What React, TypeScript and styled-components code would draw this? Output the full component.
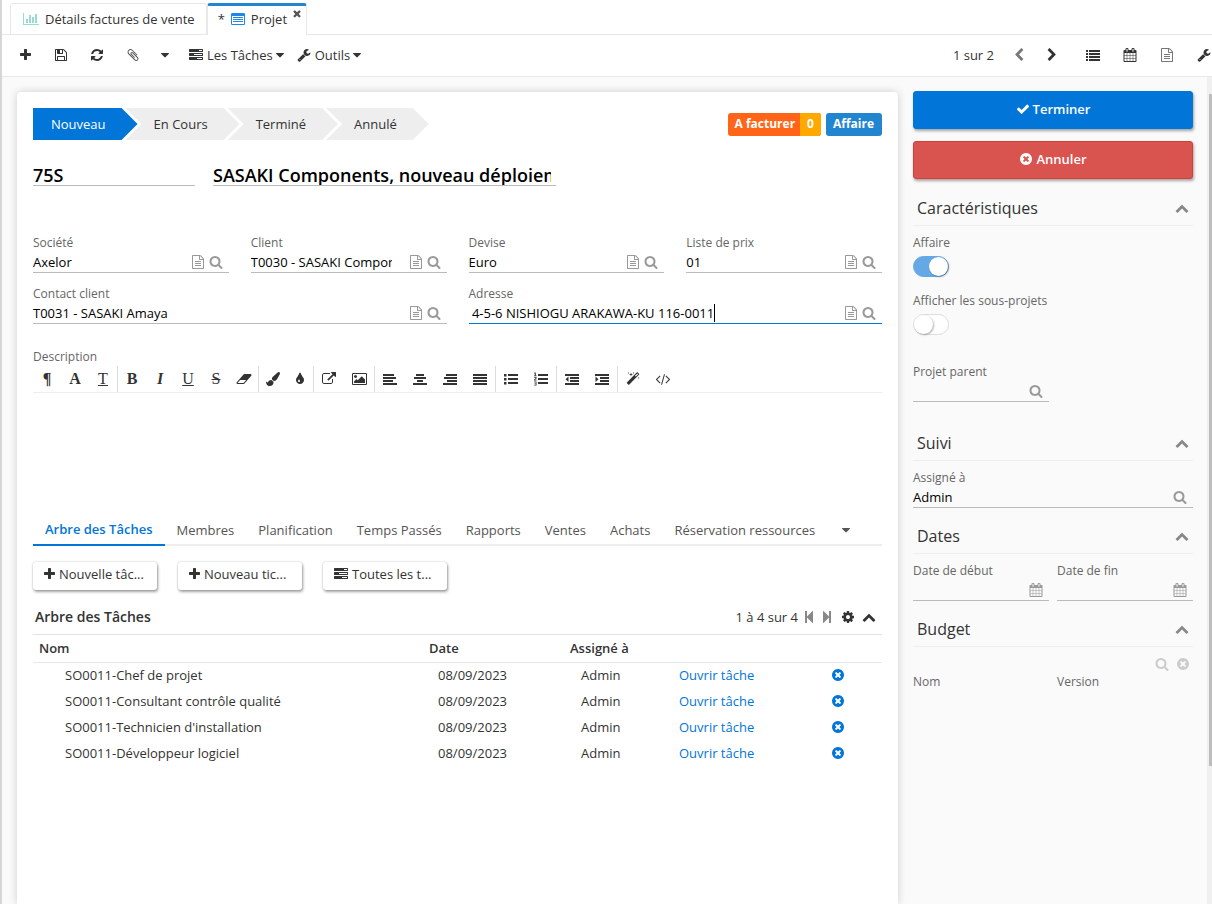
import React from "react";
import styled, { createGlobalStyle, css } from "styled-components";

const blue = "#0275d8";
const ink = "#333333";

const GlobalStyle = createGlobalStyle`
  *, *::before, *::after { box-sizing: border-box; }
  body { margin: 0; background: #ffffff; }
  body, button, input { font-family: "Open Sans", "Liberation Sans", sans-serif; font-size: 13px; line-height: 18px; color: ${ink}; }
  button { border: 0; background: none; padding: 0; cursor: pointer; }
  h1, h2, ul, ol { margin: 0; padding: 0; font-weight: 400; list-style: none; }
`;

/* Icon outlines on a 1792-unit em square */
const row = (x: number, y: number, w: number, h = 256) => `M${x} ${y}h${w}v${h}h${-w}z`;
const paths: Record<string, string> = {
  plus: "M1600 736v192q0 40-28 68t-68 28h-416v416q0 40-28 68t-68 28h-192q-40 0-68-28t-28-68v-416h-416q-40 0-68-28t-28-68v-192q0-40 28-68t68-28h416v-416q0-40 28-68t68-28h192q40 0 68 28t28 68v416h416q40 0 68 28t28 68z",
  save: "M512 1536h768v-384h-768v384zm896 0h128v-896q0-14-10-38.5t-20-34.5l-281-281q-10-10-34-20t-39-10v416q0 40-28 68t-68 28h-576q-40 0-68-28t-28-68v-416h-128v1280h128v-416q0-40 28-68t68-28h832q40 0 68 28t28 68v416zm-384-928v-320q0-13-9.5-22.5t-22.5-9.5h-192q-13 0-22.5 9.5t-9.5 22.5v320q0 13 9.5 22.5t22.5 9.5h192q13 0 22.5-9.5t9.5-22.5zm640 32v928q0 40-28 68t-68 28h-1344q-40 0-68-28t-28-68v-1344q0-40 28-68t68-28h928q40 0 88 20t76 48l280 280q28 28 48 76t20 88z",
  refresh: "M1639 1056q0 5-1 7-64 268-268 434.5t-478 166.5q-146 0-282.5-55t-243.5-157l-129 129q-19 19-45 19t-45-19-19-45v-448q0-26 19-45t45-19h448q26 0 45 19t19 45-19 45l-137 137q71 66 161 102t187 36q134 0 250-65t186-179q11-17 53-117 8-23 30-23h192q13 0 22.5 9.5t9.5 22.5zm25-800v448q0 26-19 45t-45 19h-448q-26 0-45-19t-19-45 19-45l138-138q-148-137-349-137-134 0-250 65t-186 179q-11 17-53 117-8 23-30 23h-199q-13 0-22.5-9.5t-9.5-22.5v-7q65-268 270-434.5t480-166.5q146 0 284 55.5t245 156.5l130-129q19-19 45-19t45 19 19 45z",
  search: "M1216 832q0-185-131.5-316.5t-316.5-131.5-316.5 131.5-131.5 316.5 131.5 316.5 316.5 131.5 316.5-131.5 131.5-316.5zm512 832q0 52-38 90t-90 38q-54 0-90-38l-343-342q-179 124-399 124-143 0-273.5-55.5t-225-150-150-225-55.5-273.5 55.5-273.5 150-225 225-150 273.5-55.5 273.5 55.5 225 150 150 225 55.5 273.5q0 220-124 399l343 343q37 37 37 90z",
  file: "M1596 380q28 28 48 76t20 88v1152q0 40-28 68t-68 28h-1344q-40 0-68-28t-28-68v-1600q0-40 28-68t68-28h896q40 0 88 20t76 48zm-444-244v376h376q-10-29-22-41l-313-313q-12-12-41-22zm384 1528v-1024h-416q-40 0-68-28t-28-68v-416h-768v1536h1280zm-1024-864q0-14 9-23t23-9h704q14 0 23 9t9 23v64q0 14-9 23t-23 9h-704q-14 0-23-9t-9-23v-64zm736 224q14 0 23 9t9 23v64q0 14-9 23t-23 9h-704q-14 0-23-9t-9-23v-64q0-14 9-23t23-9h704zm0 256q14 0 23 9t9 23v64q0 14-9 23t-23 9h-704q-14 0-23-9t-9-23v-64q0-14 9-23t23-9h704z",
  calendar: "M192 1664h288v-288h-288v288zm352 0h320v-288h-320v288zm-352-352h288v-320h-288v320zm352 0h320v-320h-320v320zm-352-384h288v-288h-288v288zm736 736h320v-288h-320v288zm-384-736h320v-288h-320v288zm768 736h288v-288h-288v288zm-384-352h320v-320h-320v320zm-352-864v-288q0-13-9.5-22.5t-22.5-9.5h-64q-13 0-22.5 9.5t-9.5 22.5v288q0 13 9.5 22.5t22.5 9.5h64q13 0 22.5-9.5t9.5-22.5zm736 864h288v-320h-288v320zm-384-384h320v-288h-320v288zm384 0h288v-288h-288v288zm32-480v-288q0-13-9.5-22.5t-22.5-9.5h-64q-13 0-22.5 9.5t-9.5 22.5v288q0 13 9.5 22.5t22.5 9.5h64q13 0 22.5-9.5t9.5-22.5zm384-64v1280q0 52-38 90t-90 38h-1408q-52 0-90-38t-38-90v-1280q0-52 38-90t90-38h128v-96q0-66 47-113t113-47h64q66 0 113 47t47 113v96h384v-96q0-66 47-113t113-47h64q66 0 113 47t47 113v96h128q52 0 90 38t38 90z",
  timesCircle: "M1277 1122q0-26-19-45l-181-181 181-181q19-19 19-45 0-27-19-46l-90-90q-19-19-46-19-26 0-45 19l-181 181-181-181q-19-19-45-19-27 0-46 19l-90 90q-19 19-19 46 0 26 19 45l181 181-181 181q-19 19-19 45 0 27 19 46l90 90q19 19 46 19 26 0 45-19l181-181 181 181q19 19 45 19 27 0 46-19l90-90q19-19 19-46zm387-226q0 209-103 385.5t-279.5 279.5-385.5 103-385.5-103-279.5-279.5-103-385.5 103-385.5 279.5-279.5 385.5-103 385.5 103 279.5 279.5 103 385.5z",
  check: "M1671 566q0 40-28 68l-724 724-136 136q-28 28-68 28t-68-28l-136-136-362-362q-28-28-28-68t28-68l136-136q28-28 68-28t68 28l294 295 656-657q28-28 68-28t68 28l136 136q28 28 28 68z",
  times: "M1490 1322q0 40-28 68l-136 136q-28 28-68 28t-68-28l-294-294-294 294q-28 28-68 28t-68-28l-136-136q-28-28-28-68t28-68l294-294-294-294q-28-28-28-68t28-68l136-136q28-28 68-28t68 28l294 294 294-294q28-28 68-28t68 28l136 136q28 28 28 68t-28 68l-294 294 294 294q28 28 28 68z",
  up: "M1683 1331l-166 165q-19 19-45 19t-45-19l-531-531-531 531q-19 19-45 19t-45-19l-166-165q-19-19-19-45.5t19-45.5l742-741q19-19 45-19t45 19l742 741q19 19 19 45.5t-19 45.5z",
  left: "M1427 301l-531 531 531 531q19 19 19 45t-19 45l-166 166q-19 19-45 19t-45-19l-742-742q-19-19-19-45t19-45l742-742q19-19 45-19t45 19l166 166q19 19 19 45t-19 45z",
  right: "M1363 877l-742 742q-19 19-45 19t-45-19l-166-166q-19-19-19-45t19-45l531-531-531-531q-19-19-19-45t19-45l166-166q19-19 45-19t45 19l742 742q19 19 19 45t-19 45z",
  tasks: "M1024 1408h640v-128h-640v128zm-384-512h1024v-128h-1024v128zm640-512h384v-128h-384v128zm512 832v256q0 26-19 45t-45 19h-1664q-26 0-45-19t-19-45v-256q0-26 19-45t45-19h1664q26 0 45 19t19 45zm0-512v256q0 26-19 45t-45 19h-1664q-26 0-45-19t-19-45v-256q0-26 19-45t45-19h1664q26 0 45 19t19 45zm0-512v256q0 26-19 45t-45 19h-1664q-26 0-45-19t-19-45v-256q0-26 19-45t45-19h1664q26 0 45 19t19 45z",
  caret: "M1408 704q0 26-19 45l-448 448q-19 19-45 19t-45-19l-448-448q-19-19-19-45t19-45 45-19h896q26 0 45 19t19 45z",
  wrench: "M448 1472q0-26-19-45t-45-19-45 19-19 45 19 45 45 19 45-19 19-45zm644-420l-682 682q-37 37-90 37-52 0-91-37l-106-108q-38-36-38-90 0-53 38-91l681-681q39 98 114.5 173.5t173.5 114.5zm634-435q0 39-23 106-47 134-164.5 217.5t-258.5 83.5q-185 0-316.5-131.5t-131.5-316.5 131.5-316.5 316.5-131.5q58 0 121.5 16.5t107.5 46.5q16 11 16 28t-16 28l-293 169v224l193 107q5-3 79-48.5t135.5-81 70.5-35.5q15 0 23.5 10t8.5 25z",
  clip: "M1596 1385q0 117-79 196t-196 79q-135 0-235-100l-777-776q-113-115-113-271 0-159 110-270t269-111q158 0 273 113l605 606q10 10 10 22 0 16-30.5 46.5t-46.5 30.5q-13 0-23-10l-606-607q-79-77-181-77-106 0-179 75t-73 181q0 105 76 181l776 777q63 63 145 63 64 0 106-42t42-106q0-82-63-145l-581-581q-26-24-60-24-29 0-48 19t-19 48q0 32 25 59l410 410q10 10 10 22 0 16-31 47t-47 31q-12 0-22-10l-410-410q-63-61-63-149 0-82 57-139t139-57q88 0 149 63l581 581q100 98 100 235z",
  cog: "M1152 896q0-106-75-181t-181-75-181 75-75 181 75 181 181 75 181-75 75-181zm512-109v222q0 12-8 23t-20 13l-185 28q-19 54-39 91 35 50 107 138 10 12 10 25t-9 23q-27 37-99 108t-94 71q-12 0-26-9l-138-108q-44 23-91 38-16 136-29 186-7 28-36 28h-222q-14 0-24.5-8.5t-11.5-21.5l-28-184q-49-16-90-37l-141 107q-10 9-25 9-14 0-25-11-126-114-165-168-7-10-7-23 0-12 8-23 15-21 51-66.5t54-70.5q-27-50-41-99l-183-27q-13-2-21-12.5t-8-23.5v-222q0-12 8-23t19-13l186-28q14-46 39-92-40-57-107-138-10-12-10-24 0-10 9-23 26-36 98.5-107.5t94.5-71.5q13 0 26 10l138 107q44-23 91-38 16-136 29-186 7-28 36-28h222q14 0 24.5 8.5t11.5 21.5l28 184q49 16 90 37l142-107q9-9 24-9 13 0 25 10 129 119 165 170 7 8 7 22 0 12-8 23-15 21-51 66.5t-54 70.5q26 50 41 98l183 28q13 2 21 12.5t8 23.5z",
  first: "M384 128h256v704l700-700q52-20 68 32v1464q-16 52-68 32l-700-700v704h-256z",
  last: "M1408 128h-256v704l-700-700q-52-20-68 32v1464q16 52 68 32l700-700v704h256z",
  external: "M1408 928v320q0 119-84.5 203.5t-203.5 84.5h-832q-119 0-203.5-84.5t-84.5-203.5v-832q0-119 84.5-203.5t203.5-84.5h704q14 0 23 9t9 23v64q0 14-9 23t-23 9h-704q-66 0-113 47t-47 113v832q0 66 47 113t113 47h832q66 0 113-47t47-113v-320q0-14 9-23t23-9h64q14 0 23 9t9 23zm384-864v512q0 26-19 45t-45 19-45-19l-176-176-652 652q-10 10-23 10t-23-10l-114-114q-10-10-10-23t10-23l652-652-176-176q-19-19-19-45t19-45 45-19h512q26 0 45 19t19 45z",
  picture: "M576 576q0 80-56 136t-136 56-136-56-56-136 56-136 136-56 136 56 56 136zm1024 384v448h-1408v-192l320-320 160 160 512-512zm96-704h-1600q-13 0-22.5 9.5t-9.5 22.5v1216q0 13 9.5 22.5t22.5 9.5h1600q13 0 22.5-9.5t9.5-22.5v-1216q0-13-9.5-22.5t-22.5-9.5zm160 32v1216q0 66-47 113t-113 47h-1600q-66 0-113-47t-47-113v-1216q0-66 47-113t113-47h1600q66 0 113 47t47 113z",
  eraser: "M960 1408l336-384h-768l-336 384h768zm1013-1077q15 34 9.5 71.5t-30.5 65.5l-896 1024q-38 44-96 44h-768q-38 0-69.5-20.5t-47.5-54.5q-15-34-9.5-71.5t30.5-65.5l896-1024q38-44 96-44h768q38 0 69.5 20.5t47.5 54.5z",
  brush: "M1615 0q70 0 122.5 46.5t52.5 116.5q0 63-45 151-332 629-465 752-97 91-218 91-126 0-216.5-92.5t-90.5-219.5q0-128 92-212l638-579q59-54 130-54zm-909 1034q39 76 106.5 130t150.5 76l1 71q4 213-129.5 347t-348.5 134q-123 0-218-46.5t-152.5-127.5-86.5-183-29-220q7 5 41 30t62 44.5 59 36.5 46 17q41 0 55-37 25-66 57.5-112.5t69.5-76 88-47.5 103-25.5 125-10.5z",
  tint: "M896 1152q0-36-20-69-1-1-15.5-22.5t-25.5-38-25-44-21-50.5q-4-16-21-16t-21 16q-7 23-21 50.5t-25 44-25.5 38-15.5 22.5q-20 33-20 69 0 53 37.5 90.5t90.5 37.5 90.5-37.5 37.5-90.5zm512-128q0 212-150 362t-362 150-362-150-150-362q0-145 81-275 6-9 62.5-90.5t101-151 99.5-178 83-201.5q9-30 34-47t51-17 51.5 17 33.5 47q28 93 83 201.5t99.5 178 101 151 62.5 90.5q81 127 81 275z",
  magic: "M1254 581l293-293-107-107-293 293zm447-293q0 27-18 45l-1286 1286q-18 18-45 18t-45-18l-198-198q-18-18-18-45t18-45l1286-1286q18-18 45-18t45 18l198 198q18 18 18 45zm-1351-190l98 30-98 30-30 98-30-98-98-30 98-30 30-98zm350 162l196 60-196 60-60 196-60-196-196-60 196-60 60-196zm930 478l98 30-98 30-30 98-30-98-98-30 98-30 30-98zm-640-640l98 30-98 30-30 98-30-98-98-30 98-30 30-98z",
  code: "M553 1399l-50 50q-10 10-23 10t-23-10l-466-466q-10-10-10-23t10-23l466-466q10-10 23-10t23 10l50 50q10 10 10 23t-10 23l-393 393 393 393q10 10 10 23t-10 23zm591-1067l-373 1291q-4 13-15.5 19.5t-23.5 2.5l-62-17q-13-4-19.5-15.5t-2.5-24.5l373-1291q4-13 15.5-19.5t23.5-2.5l62 17q13 4 19.5 15.5t2.5 24.5zm657 651l-466 466q-10 10-23 10t-23-10l-50-50q-10-10-10-23t10-23l393-393-393-393q-10-10-10-23t10-23l50-50q10-10 23-10t23 10l466 466q10 10 10 23t-10 23z",
  chart: "M640 896v512h-256v-512h256zm384-512v1024h-256v-1024h256zm1024 1152v128h-2048v-1536h128v1408h1920zm-640-896v768h-256v-768h256zm384-384v1152h-256v-1152h256z",
  listAlt: "M160 128h1472q160 0 160 160v1216q0 160-160 160h-1472q-160 0-160-160v-1216q0-160 160-160zM128 512v992q0 32 32 32h1472q32 0 32-32v-992z" + [640, 896, 1152].map((y) => row(256, y, 1280, 128)).join(""),
  list: [256, 640, 1024, 1408].map((y) => row(0, y, 256) + row(384, y, 1408)).join(""),
  alignLeft: row(0, 256, 1408) + row(0, 640, 1664) + row(0, 1024, 1280) + row(0, 1408, 1792),
  alignCenter: row(384, 256, 1024) + row(128, 640, 1536) + row(512, 1024, 768) + row(0, 1408, 1792),
  alignRight: row(384, 256, 1408) + row(128, 640, 1664) + row(512, 1024, 1280) + row(0, 1408, 1792),
  justify: [256, 640, 1024, 1408].map((y) => row(0, y, 1792)).join(""),
  bullets: [256, 768, 1280].map((y) => row(0, y, 320, 320) + row(512, y, 1280)).join(""),
  numbers: [256, 768, 1280].map((y) => row(512, y, 1280)).join("") + "M100 64h128v384h96v80h-320v-80h96v-260h-96v-70zM20 640h300v210l-180 140h190v84h-330v-90l220-180v-80h-200zM10 1216h310v500h-310v-84h210v-120h-150v-84h150v-128h-210z",
  outdent: row(0, 256, 1792) + row(640, 640, 1152) + row(640, 1024, 1152) + row(0, 1408, 1792) + "M448 576v704l-384-352z",
  indent: row(0, 256, 1792) + row(640, 640, 1152) + row(640, 1024, 1152) + row(0, 1408, 1792) + "M64 576v704l384-352z",
};
/* [left edge, width] of glyphs that do not fill the square */
const boxes: Record<string, [number, number]> = {
  chart: [0, 2048],
  eraser: [0, 2048],
  picture: [-64, 1920],
  plus: [192, 1408],
  times: [256, 1280],
};

const Svg = styled.svg<{ $tone?: string }>`
  flex: none;
  display: block;
  height: 14px;
  fill: ${(p) => p.$tone ?? "currentColor"};
`;

function Icon({ name, tone }: { name: string; tone?: string }) {
  const [x, w] = boxes[name] ?? [0, 1792];
  return (
    <Svg $tone={tone} width={w / 128} viewBox={`${x} 0 ${w} 1792`} fillRule={name === "listAlt" ? "evenodd" : undefined} aria-hidden="true">
      <path d={paths[name]} />
    </Svg>
  );
}

const Page = styled.div`
  display: flex;
  flex-direction: column;
  min-height: 100vh;
  border-left: 2px solid #d6d6d6;
`;

const TabBar = styled.nav`
  display: flex;
  height: 35px;
  padding: 3px 8px 0;
  border-bottom: 1px solid #e8e8e8;
`;

const ViewTab = styled.a<{ $active?: boolean }>`
  display: flex;
  align-items: center;
  gap: 6px;
  height: 32px;
  padding: 0 11px 0 12px;
  border: 1px solid #e8e8e8;
  border-radius: 3px 3px 0 0;
  color: ${ink};
  text-decoration: none;
  ${(p) =>
    p.$active &&
    css`
      padding: 0 5px 3px 10px;
      background: #ffffff;
      border-top: 3px solid #2185d0;
      border-bottom: 0;
    `}
`;

const CloseTab = styled.button`
  align-self: flex-start;
  padding-top: 2px;
  svg { height: 11px; width: 8px; }
`;

const Toolbar = styled.div`
  display: flex;
  align-items: center;
  height: 42px;
  padding: 0 0 2px 5px;
  border-bottom: 1px solid #e8e8e8;
`;

const ToolButton = styled.button<{ $w: number }>`
  display: flex;
  align-items: center;
  justify-content: center;
  width: ${(p) => p.$w}px;
  height: 32px;
`;

const MenuButton = styled.button`
  display: flex;
  align-items: center;
  gap: 4px;
  height: 32px;
  margin-left: 10px;
  svg:last-child { margin-left: -4px; }
`;

const Spacer = styled.span`
  flex: 1;
`;

const ToolGroup = styled.div<{ $gap: number }>`
  display: flex;
  align-items: center;
  gap: ${(p) => p.$gap}px;
  & + & { margin-left: 25px; }
`;

const Body = styled.main`
  flex: 1;
  display: grid;
  grid-template-columns: minmax(0, 1fr) 280px 19px;
  background: #fafafa;
`;

const Card = styled.section`
  margin: 15px 15px 0;
  padding: 16px 16px 0;
  border-radius: 4px 4px 0 0;
  background: #ffffff;
  box-shadow: 0 0 8px rgba(0, 0, 0, 0.18);
`;

const Between = styled.div`
  display: flex;
  justify-content: space-between;
  align-items: center;
`;

const Steps = styled.ol`
  display: flex;
`;

const Step = styled.li<{ $current?: boolean }>`
  height: 32px;
  line-height: 32px;
  padding: 0 32px 0 28px;
  margin-left: -12px;
  background: #eeeeee;
  clip-path: polygon(0 0, calc(100% - 16px) 0, 100% 50%, calc(100% - 16px) 100%, 0 100%, 16px 50%);
  ${(p) =>
    p.$current &&
    css`
      margin-left: 0;
      padding-left: 18px;
      background: ${blue};
      color: #ffffff;
      clip-path: polygon(0 0, calc(100% - 16px) 0, 100% 50%, calc(100% - 16px) 100%, 0 100%);
    `}
`;

const Badges = styled.div`
  display: flex;
  gap: 5px;
`;

const Badge = styled.span<{ $bg: string }>`
  display: flex;
  height: 23px;
  padding: 0 8px 0 7px;
  border-radius: 3px;
  overflow: hidden;
  background: ${(p) => p.$bg};
  color: #ffffff;
  font-size: 12px;
  font-weight: 700;
  line-height: 22px;
`;

const BadgeCount = styled.span`
  margin: 0 -8px 0 5px;
  padding: 0 7px;
  background: #ffa800;
`;

const Titles = styled.div`
  display: flex;
  gap: 18px;
  margin-top: 25px;
`;

const TitleInput = styled.input<{ $w: number }>`
  width: ${(p) => p.$w}px;
  height: 21px;
  padding: 0 5px 0 0;
  border: 0;
  border-bottom: 1px solid #bbbbbb;
  background: none;
  color: #000000;
  font-size: 18px;
  line-height: 20px;
  font-weight: 600;
  outline: 0;
`;

const Fields = styled.div<{ $cols: number; $gap: number; $top?: number }>`
  display: grid;
  grid-template-columns: repeat(${(p) => p.$cols}, minmax(0, 1fr));
  gap: 12px ${(p) => p.$gap}px;
  margin-top: ${(p) => p.$top ?? 0}px;
`;

const FieldBox = styled.div<{ $span?: number }>`
  grid-column: span ${(p) => p.$span ?? 1};
`;

const Label = styled.label`
  display: block;
  font-size: 12px;
  line-height: 18px;
  color: #666666;
`;

const Control = styled.div<{ $focus?: boolean }>`
  display: flex;
  align-items: center;
  height: 21px;
  padding-right: 6px;
  border-bottom: 1px solid ${(p) => (p.$focus ? blue : "#bbbbbb")};
`;

const TextInput = styled.input<{ $fit?: boolean }>`
  flex: ${(p) => (p.$fit ? "0 1 auto" : 1)};
  field-sizing: ${(p) => (p.$fit ? "content" : "fixed")};
  min-width: 0;
  height: 20px;
  padding: 0;
  border: 0;
  outline: 0;
  background: none;
  color: #000000;
`;

const Caret = styled.span`
  width: 1px;
  height: 18px;
  margin-right: auto;
  background: #000000;
`;

const FieldIcons = styled.span`
  display: flex;
  gap: 4px;
  margin-left: 17px;
`;

interface FieldProps {
  id: string;
  label: string;
  value?: string;
  icons?: string[];
  span?: number;
  focus?: boolean;
}

function Field({ id, label, value = "", icons = ["file", "search"], span, focus }: FieldProps) {
  return (
    <FieldBox $span={span}>
      <Label htmlFor={id}>{label}</Label>
      <Control $focus={focus}>
        <TextInput id={id} defaultValue={value} $fit={focus} />
        {focus && <Caret />}
        <FieldIcons>
          {icons.map((n) => (
            <button key={n} type="button" aria-label={`${label} ${n}`}>
              <Icon name={n} tone="#999999" />
            </button>
          ))}
        </FieldIcons>
      </Control>
    </FieldBox>
  );
}

const Editor = styled.div`
  margin-top: 24px;
  height: 165px;
`;

const EditorBar = styled.div`
  display: flex;
  height: 27px;
  border-bottom: 1px solid #eeeeee;
`;

const EditorGroup = styled.div`
  display: flex;
  & + & { border-left: 1px solid #dddddd; }
`;

const EditorButton = styled.button<{ $w: number }>`
  display: flex;
  align-items: center;
  justify-content: center;
  width: ${(p) => p.$w}px;
`;

const Letter = styled.span<{ $mark?: string; $italic?: boolean; $light?: boolean }>`
  font-family: "Liberation Serif", serif;
  font-size: 16px;
  font-weight: ${(p) => (p.$light ? 400 : 700)};
  font-style: ${(p) => (p.$italic ? "italic" : "normal")};
  text-decoration: ${(p) => p.$mark ?? "none"};
`;

const Tabs = styled.div`
  display: flex;
  height: 33px;
  border-bottom: 2px solid #eeeeee;
`;

const Tab = styled.button<{ $active?: boolean }>`
  height: 33px;
  padding: 0 12px;
  color: #555555;
  ${(p) =>
    p.$active &&
    css`
      color: ${blue};
      font-weight: 600;
      border-bottom: 2px solid ${blue};
    `}
`;

const Actions = styled.div`
  display: flex;
  gap: 21px;
  margin-top: 16px;
`;

const ActionButton = styled.button`
  display: flex;
  align-items: center;
  gap: 4px;
  width: 124px;
  height: 28px;
  padding: 0 0 4px 11px;
  border-radius: 3px;
  background: #ffffff;
  box-shadow: 0 0 2px rgba(0, 0, 0, 0.25), 1px 2px 3px rgba(0, 0, 0, 0.35);
  white-space: nowrap;
`;

const PanelHead = styled(Between)`
  height: 45px;
  padding: 9px 6px 0 2px;
  border-bottom: 1px solid #e4e4e4;
`;

const PanelTitle = styled.h2`
  && { font-size: 14px; font-weight: 600; }
`;

const Pager = styled.div`
  display: flex;
  align-items: center;
  button { margin-left: 4px; }
  button:nth-of-type(n + 3) { margin-left: 7px; }
`;

const Grid = styled.table`
  width: 100%;
  table-layout: fixed;
  border-collapse: collapse;
  th { height: 27px; padding: 0 6px; border-bottom: 1px solid #e8e8e8; text-align: left; font-weight: 600; }
  td { height: 26px; padding: 0; }
  td button { display: block; }
  a { color: ${blue}; text-decoration: none; }
`;

const Col = styled.col<{ $w: number }>`
  width: ${(p) => p.$w}px;
`;

const Cell = styled.td<{ $indent: number }>`
  && { padding-left: ${(p) => p.$indent}px; }
`;

const Side = styled.aside`
  padding-top: 14px;
`;

const BigButton = styled.button<{ $bg: string; $edge: string }>`
  display: flex;
  align-items: center;
  justify-content: center;
  gap: 3px;
  width: 100%;
  height: 38px;
  margin-bottom: 12px;
  padding-bottom: 2px;
  border: 1px solid ${(p) => p.$edge};
  border-radius: 3px;
  background: ${(p) => p.$bg};
  box-shadow: 1px 2px 3px rgba(0, 0, 0, 0.35);
  color: #ffffff;
  font-weight: 600;
`;

const SectionHead = styled(Between)<{ $top: number }>`
  height: 36px;
  margin-top: ${(p) => p.$top}px;
  margin-bottom: 8px;
  padding: 0 4px;
  border-bottom: 1px solid #eeeeee;
  h2 { font-size: 16px; line-height: 22px; font-weight: 500; }
`;

function Section({ title, top }: { title: string; top: number }) {
  return (
    <SectionHead $top={top}>
      <h2>{title}</h2>
      <button type="button" aria-label={`Replier ${title}`}>
        <Icon name="up" tone="#888888" />
      </button>
    </SectionHead>
  );
}

const Switch = styled.input`
  appearance: none;
  display: block;
  width: 36px;
  height: 21px;
  margin: 4px 0 0;
  border: 1px solid #dddddd;
  border-radius: 11px;
  background: #ffffff;
  &::before {
    content: "";
    display: block;
    width: 19px;
    height: 19px;
    border-radius: 10px;
    background: #ffffff;
    box-shadow: 1px 1px 2px rgba(0, 0, 0, 0.3);
  }
  &:checked { background: #64a8e6; border-color: #64a8e6; }
  &:checked::before { margin-left: 15px; }
`;

const SwitchRow = styled.div`
  height: 58px;
`;

const SideIcons = styled.div`
  display: flex;
  justify-content: flex-end;
  gap: 7px;
  height: 18px;
  padding: 2px 3px 0 0;
`;

const Track = styled.div`
  justify-self: end;
  width: 5px;
  padding-top: 17px;
  background: #f0f0f0;
`;

const Thumb = styled.div`
  height: 672px;
  margin-left: 2px;
  background: #bdbdbd;
`;

const tasks = ["SO0011-Chef de projet", "SO0011-Consultant contrôle qualité", "SO0011-Technicien d'installation", "SO0011-Développeur logiciel"];
const tabs = ["Membres", "Planification", "Temps Passés", "Rapports", "Ventes", "Achats", "Réservation ressources"];

const editorGroups: { w: number; items: [string, React.ReactNode][] }[] = [
  { w: 28, items: [["Style", <Letter>¶</Letter>], ["Police", <Letter>A</Letter>], ["Taille", <Letter $light $mark="underline">T</Letter>]] },
  {
    w: 28,
    items: [
      ["Gras", <Letter>B</Letter>],
      ["Italique", <Letter $italic>I</Letter>],
      ["Souligné", <Letter $light $mark="underline">U</Letter>],
      ["Barré", <Letter $light $mark="line-through">S</Letter>],
      ["Effacer", <Icon name="eraser" />],
    ],
  },
  { w: 27, items: [["Surligner", <Icon name="brush" />], ["Couleur", <Icon name="tint" />]] },
  { w: 30, items: [["Lien", <Icon name="external" />], ["Image", <Icon name="picture" />]] },
  {
    w: 30,
    items: [
      ["Gauche", <Icon name="alignLeft" />],
      ["Centrer", <Icon name="alignCenter" />],
      ["Droite", <Icon name="alignRight" />],
      ["Justifier", <Icon name="justify" />],
    ],
  },
  { w: 30, items: [["Puces", <Icon name="bullets" />], ["Numéros", <Icon name="numbers" />]] },
  { w: 30, items: [["Désindenter", <Icon name="outdent" />], ["Indenter", <Icon name="indent" />]] },
  { w: 30, items: [["Normaliser", <Icon name="magic" />], ["Code", <Icon name="code" />]] },
];

export default function App() {
  return (
    <>
      <GlobalStyle />
      <Page>
        <TabBar>
          <ViewTab href="#factures">
            <Icon name="chart" tone="#98dbd1" />
            Détails factures de vente
          </ViewTab>
          <ViewTab href="#projet" $active>
            <span>*</span>
            <Icon name="listAlt" tone="#2185f0" />
            Projet
            <CloseTab type="button" aria-label="Fermer">
              <Icon name="times" tone="#555555" />
            </CloseTab>
          </ViewTab>
        </TabBar>

        <Toolbar>
          <ToolButton $w={36} aria-label="Nouveau"><Icon name="plus" /></ToolButton>
          <ToolButton $w={36} aria-label="Enregistrer"><Icon name="save" /></ToolButton>
          <ToolButton $w={36} aria-label="Actualiser"><Icon name="refresh" /></ToolButton>
          <ToolButton $w={36} aria-label="Pièces jointes"><Icon name="clip" tone="#555555" /></ToolButton>
          <ToolButton $w={28} aria-label="Plus"><Icon name="caret" /></ToolButton>
          <MenuButton><Icon name="tasks" />Les Tâches<Icon name="caret" /></MenuButton>
          <MenuButton><Icon name="wrench" />Outils<Icon name="caret" /></MenuButton>
          <Spacer />
          <ToolGroup $gap={17}>
            <span>1 sur 2</span>
            <ToolButton $w={16} aria-label="Précédent"><Icon name="left" tone="#777777" /></ToolButton>
            <ToolButton $w={16} aria-label="Suivant"><Icon name="right" /></ToolButton>
          </ToolGroup>
          <ToolGroup $gap={21}>
            <ToolButton $w={16} aria-label="Liste"><Icon name="list" /></ToolButton>
            <ToolButton $w={16} aria-label="Calendrier"><Icon name="calendar" /></ToolButton>
            <ToolButton $w={16} aria-label="Formulaire"><Icon name="file" tone="#777777" /></ToolButton>
            <ToolButton $w={16} aria-label="Outils"><Icon name="wrench" /></ToolButton>
          </ToolGroup>
        </Toolbar>

        <Body>
          <Card>
            <Between>
              <Steps>
                <Step $current>Nouveau</Step>
                <Step>En Cours</Step>
                <Step>Terminé</Step>
                <Step>Annulé</Step>
              </Steps>
              <Badges>
                <Badge $bg="#ff6418">A facturer<BadgeCount>0</BadgeCount></Badge>
                <Badge $bg="#2185d0">Affaire</Badge>
              </Badges>
            </Between>

            <Titles>
              <TitleInput $w={162} aria-label="Code" defaultValue="75S" />
              <TitleInput $w={343} aria-label="Nom du projet" defaultValue="SASAKI Components, nouveau déploiement" />
            </Titles>

            <Fields $cols={4} $gap={22} $top={48}>
              <Field id="societe" label="Société" value="Axelor" />
              <Field id="client" label="Client" value="T0030 - SASAKI Components" />
              <Field id="devise" label="Devise" value="Euro" />
              <Field id="prix" label="Liste de prix" value="01" />
              <Field id="contact" label="Contact client" value="T0031 - SASAKI Amaya" span={2} />
              <Field id="adresse" label="Adresse" value=" 4-5-6 NISHIOGU ARAKAWA-KU 116-0011" span={2} focus />
            </Fields>

            <Editor>
              <Label as="div">Description</Label>
              <EditorBar>
                {editorGroups.map((g, i) => (
                  <EditorGroup key={i}>
                    {g.items.map(([name, icon]) => (
                      <EditorButton key={name} $w={g.w} type="button" aria-label={name}>
                        {icon}
                      </EditorButton>
                    ))}
                  </EditorGroup>
                ))}
              </EditorBar>
            </Editor>

            <Tabs>
              <Tab $active>Arbre des Tâches</Tab>
              {tabs.map((t) => (
                <Tab key={t}>{t}</Tab>
              ))}
              <Tab aria-label="Plus d'onglets"><Icon name="caret" /></Tab>
            </Tabs>

            <Actions>
              <ActionButton><Icon name="plus" />Nouvelle tâc...</ActionButton>
              <ActionButton><Icon name="plus" />Nouveau tic...</ActionButton>
              <ActionButton><Icon name="tasks" />Toutes les t...</ActionButton>
            </Actions>

            <PanelHead>
              <PanelTitle>Arbre des Tâches</PanelTitle>
              <Pager>
                1 à 4 sur 4
                <button aria-label="Page précédente"><Icon name="first" tone="#888888" /></button>
                <button aria-label="Page suivante"><Icon name="last" tone="#888888" /></button>
                <button aria-label="Options"><Icon name="cog" /></button>
                <button aria-label="Replier"><Icon name="up" /></button>
              </Pager>
            </PanelHead>

            <Grid>
              <colgroup>
                <col />
                <Col $w={141} />
                <Col $w={105} />
                <Col $w={138} />
                <Col $w={75} />
              </colgroup>
              <thead>
                <tr>
                  <th>Nom</th>
                  <th>Date</th>
                  <th>Assigné à</th>
                  <th aria-label="Ouvrir" />
                  <th aria-label="Supprimer" />
                </tr>
              </thead>
              <tbody>
                {tasks.map((t) => (
                  <tr key={t}>
                    <Cell $indent={32}>{t}</Cell>
                    <Cell $indent={15}>08/09/2023</Cell>
                    <Cell $indent={17}>Admin</Cell>
                    <Cell $indent={10}><a href="#tache">Ouvrir tâche</a></Cell>
                    <Cell $indent={24}>
                      <button aria-label="Supprimer"><Icon name="timesCircle" tone={blue} /></button>
                    </Cell>
                  </tr>
                ))}
              </tbody>
            </Grid>
          </Card>

          <Side>
            <BigButton $bg={blue} $edge={blue}><Icon name="check" />Terminer</BigButton>
            <BigButton $bg="#d9534f" $edge="#d43f3a"><Icon name="timesCircle" />Annuler</BigButton>

            <Section title="Caractéristiques" top={-1} />
            <SwitchRow>
              <Label htmlFor="affaire">Affaire</Label>
              <Switch id="affaire" type="checkbox" defaultChecked />
            </SwitchRow>
            <SwitchRow>
              <Label htmlFor="sousprojets">Afficher les sous-projets</Label>
              <Switch id="sousprojets" type="checkbox" />
            </SwitchRow>
            <Fields $cols={2} $gap={8} $top={13}>
              <Field id="parent" label="Projet parent" icons={["search"]} />
            </Fields>

            <Section title="Suivi" top={23} />
            <Field id="assigne" label="Assigné à" value="Admin" icons={["search"]} />

            <Section title="Dates" top={10} />
            <Fields $cols={2} $gap={8}>
              <Field id="debut" label="Date de début" icons={["calendar"]} />
              <Field id="fin" label="Date de fin" icons={["calendar"]} />
            </Fields>

            <Section title="Budget" top={10} />
            <SideIcons>
              <Icon name="search" tone="#cccccc" />
              <Icon name="timesCircle" tone="#cccccc" />
            </SideIcons>
            <Fields $cols={2} $gap={8}>
              <Label as="span">Nom</Label>
              <Label as="span">Version</Label>
            </Fields>
          </Side>
          <Track>
            <Thumb />
          </Track>
        </Body>
      </Page>
    </>
  );
}
